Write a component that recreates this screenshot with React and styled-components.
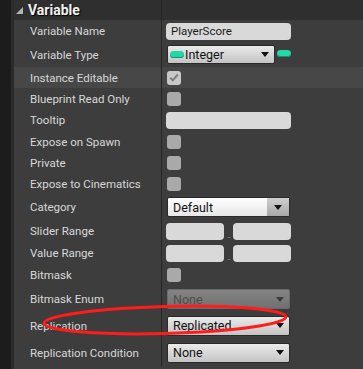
import React from "react";
import styled, { createGlobalStyle } from "styled-components";

const Global = createGlobalStyle`
  html, body { margin: 0; padding: 0; background: #3d3d3d; }
  body { font-family: Roboto, "Liberation Sans", sans-serif; }
`;

const Screen = styled.div`
  position: relative;
  width: 363px;
  height: 369px;
  display: flex;
  overflow: hidden;
  background: #3d3d3d;
`;

const LeftStrip = styled.div`
  width: 11px;
  flex: none;
  background: #1c1c1c;
  border-right: 3px solid #2b2b2b;
`;

const Panel = styled.div`
  flex: 1;
  display: flex;
  flex-direction: column;
  background: #3d3d3d;
`;

const Row = styled.div`
  display: grid;
  grid-template-columns: 148px 1fr;
  height: ${(p) => p.$h}px;
  background: ${(p) => (p.$hl ? "#474747" : "transparent")};
`;

const HeaderRow = styled(Row)`
  background: #2f2f2f;
`;

const LabelCell = styled.div`
  display: flex;
  align-items: center;
  padding-left: 16px;
  border-right: 1px solid #262626;
  color: #d8d8d8;
  font-size: 11.5px;
  white-space: nowrap;
`;

const HeaderTitle = styled.div`
  display: flex;
  align-items: center;
  gap: 5px;
  padding-left: 2px;
  border-right: 1px solid #262626;
  color: #f2f2f2;
  font-weight: 700;
  font-size: 14px;
  text-shadow: 1px 1px 1px #000;
`;

const ValueCell = styled.div`
  display: flex;
  align-items: center;
  padding-left: 4px;
  gap: ${(p) => p.$gap ?? 2}px;
`;

const TextBox = styled.div`
  width: ${(p) => p.$w || 125}px;
  height: 17px;
  box-sizing: border-box;
  background: #d9d9d9;
  border-radius: 4px;
  padding-left: 5px;
  display: flex;
  align-items: center;
  font-size: 11.5px;
  color: #1a1a1a;
`;

const Check = styled.div`
  width: 14px;
  height: 14px;
  margin-left: 1px;
  border-radius: 3px;
  background: ${(p) => (p.$on ? "#c9c9c9" : "#a9a9a9")};
  display: flex;
  align-items: center;
  justify-content: center;
`;

const Dropdown = styled.div`
  position: relative;
  width: ${(p) => p.$w || 123}px;
  height: ${(p) => p.$hgt || 20}px;
  box-sizing: border-box;
  margin-left: 1px;
  border: 1px solid ${(p) => (p.$disabled ? "#6a6a6a" : "#2a2a2a")};
  border-radius: 2px;
  background: ${(p) =>
    p.$disabled
      ? "linear-gradient(#848484, #717171)"
      : p.$white
      ? "linear-gradient(#ffffff, #e6e6e6)"
      : "linear-gradient(#eaeaea, #c4c4c4)"};
  display: flex;
  align-items: center;
  padding-left: ${(p) => p.$pl ?? 5}px;
  gap: 1px;
  font-size: 12.5px;
  color: ${(p) => (p.$disabled ? "#4e4e4e" : "#111")};
`;

const ArrowBox = styled.div`
  position: absolute;
  top: 0;
  bottom: 0;
  right: 0;
  width: ${(p) => (p.$seg ? 22 : 18)}px;
  display: flex;
  align-items: center;
  justify-content: center;
  background: ${(p) => (p.$seg ? "linear-gradient(#cfcfcf, #a8a8a8)" : "transparent")};
  &::after {
    content: "";
    border-left: 4px solid transparent;
    border-right: 4px solid transparent;
    border-top: 5px solid ${(p) => (p.$disabled ? "#3c3c3c" : "#111")};
  }
`;

const Pill = styled.div`
  width: 14px;
  height: 7px;
  border-radius: 4px;
  background: #22d9a6;
  box-shadow: inset 0 -1px 0 #13906d;
  flex: none;
  margin-top: ${(p) => p.$mt || 0}px;
`;

const Dots = styled.span`
  width: 9px;
  align-self: flex-end;
  margin-bottom: 4px;
  text-align: center;
  color: #a0a0a0;
  font-size: 9px;
  line-height: 6px;
  letter-spacing: -1px;
`;

const Overlay = styled.svg`
  position: absolute;
  left: 0;
  top: 0;
  pointer-events: none;
`;

const CheckMark = () => (
  <svg width="10" height="9" viewBox="0 0 10 9">
    <path d="M1.2 4.8 L3.8 7.3 L8.8 1.5" fill="none" stroke="#7d7d7d" strokeWidth="2" />
  </svg>
);

const Triangle = () => (
  <svg width="7" height="7" viewBox="0 0 7 7">
    <path d="M7 0 L7 7 L0 7 Z" fill="#b4b4b4" />
  </svg>
);

const Label = ({ children }) => <LabelCell>{children}</LabelCell>;

export default function App() {
  return (
    <>
      <Global />
      <Screen>
        <LeftStrip />
        <Panel>
          <HeaderRow $h={20}>
            <HeaderTitle>
              <Triangle />
              Variable
            </HeaderTitle>
            <div />
          </HeaderRow>
          <Row $h={22}>
            <Label>Variable Name</Label>
            <ValueCell>
              <TextBox>PlayerScore</TextBox>
            </ValueCell>
          </Row>
          <Row $h={25}>
            <Label>Variable Type</Label>
            <ValueCell>
              <Dropdown $w={108} $hgt={19} $pl={2}>
                <Pill />
                Integer
                <ArrowBox />
              </Dropdown>
              <Pill $mt={-2} />
            </ValueCell>
          </Row>
          <Row $h={21} $hl>
            <Label>Instance Editable</Label>
            <ValueCell>
              <Check $on>
                <CheckMark />
              </Check>
            </ValueCell>
          </Row>
          <Row $h={21}>
            <Label>Blueprint Read Only</Label>
            <ValueCell>
              <Check />
            </ValueCell>
          </Row>
          <Row $h={22}>
            <Label>Tooltip</Label>
            <ValueCell>
              <TextBox />
            </ValueCell>
          </Row>
          <Row $h={21}>
            <Label>Expose on Spawn</Label>
            <ValueCell>
              <Check />
            </ValueCell>
          </Row>
          <Row $h={21}>
            <Label>Private</Label>
            <ValueCell>
              <Check />
            </ValueCell>
          </Row>
          <Row $h={21}>
            <Label>Expose to Cinematics</Label>
            <ValueCell>
              <Check />
            </ValueCell>
          </Row>
          <Row $h={26}>
            <Label>Category</Label>
            <ValueCell>
              <Dropdown $white $hgt={20}>
                Default
                <ArrowBox $seg />
              </Dropdown>
            </ValueCell>
          </Row>
          <Row $h={22}>
            <Label>Slider Range</Label>
            <ValueCell $gap={0}>
              <TextBox $w={58} />
              <Dots>..</Dots>
              <TextBox $w={58} />
            </ValueCell>
          </Row>
          <Row $h={22}>
            <Label>Value Range</Label>
            <ValueCell $gap={0}>
              <TextBox $w={58} />
              <Dots>..</Dots>
              <TextBox $w={58} />
            </ValueCell>
          </Row>
          <Row $h={22}>
            <Label>Bitmask</Label>
            <ValueCell>
              <Check />
            </ValueCell>
          </Row>
          <Row $h={26}>
            <Label>Bitmask Enum</Label>
            <ValueCell>
              <Dropdown $disabled>
                None
                <ArrowBox $disabled />
              </Dropdown>
            </ValueCell>
          </Row>
          <Row $h={27}>
            <Label>Replication</Label>
            <ValueCell>
              <Dropdown>
                Replicated
                <ArrowBox />
              </Dropdown>
            </ValueCell>
          </Row>
          <Row $h={27}>
            <Label>Replication Condition</Label>
            <ValueCell>
              <Dropdown>
                None
                <ArrowBox />
              </Dropdown>
            </ValueCell>
          </Row>
        </Panel>
        <Overlay width="363" height="369" viewBox="0 0 363 369">
          <ellipse
            cx="165"
            cy="320"
            rx="121"
            ry="13.5"
            transform="rotate(-1.5 165 320)"
            fill="none"
            stroke="#ff1c1c"
            strokeWidth="3"
          />
        </Overlay>
      </Screen>
    </>
  );
}
